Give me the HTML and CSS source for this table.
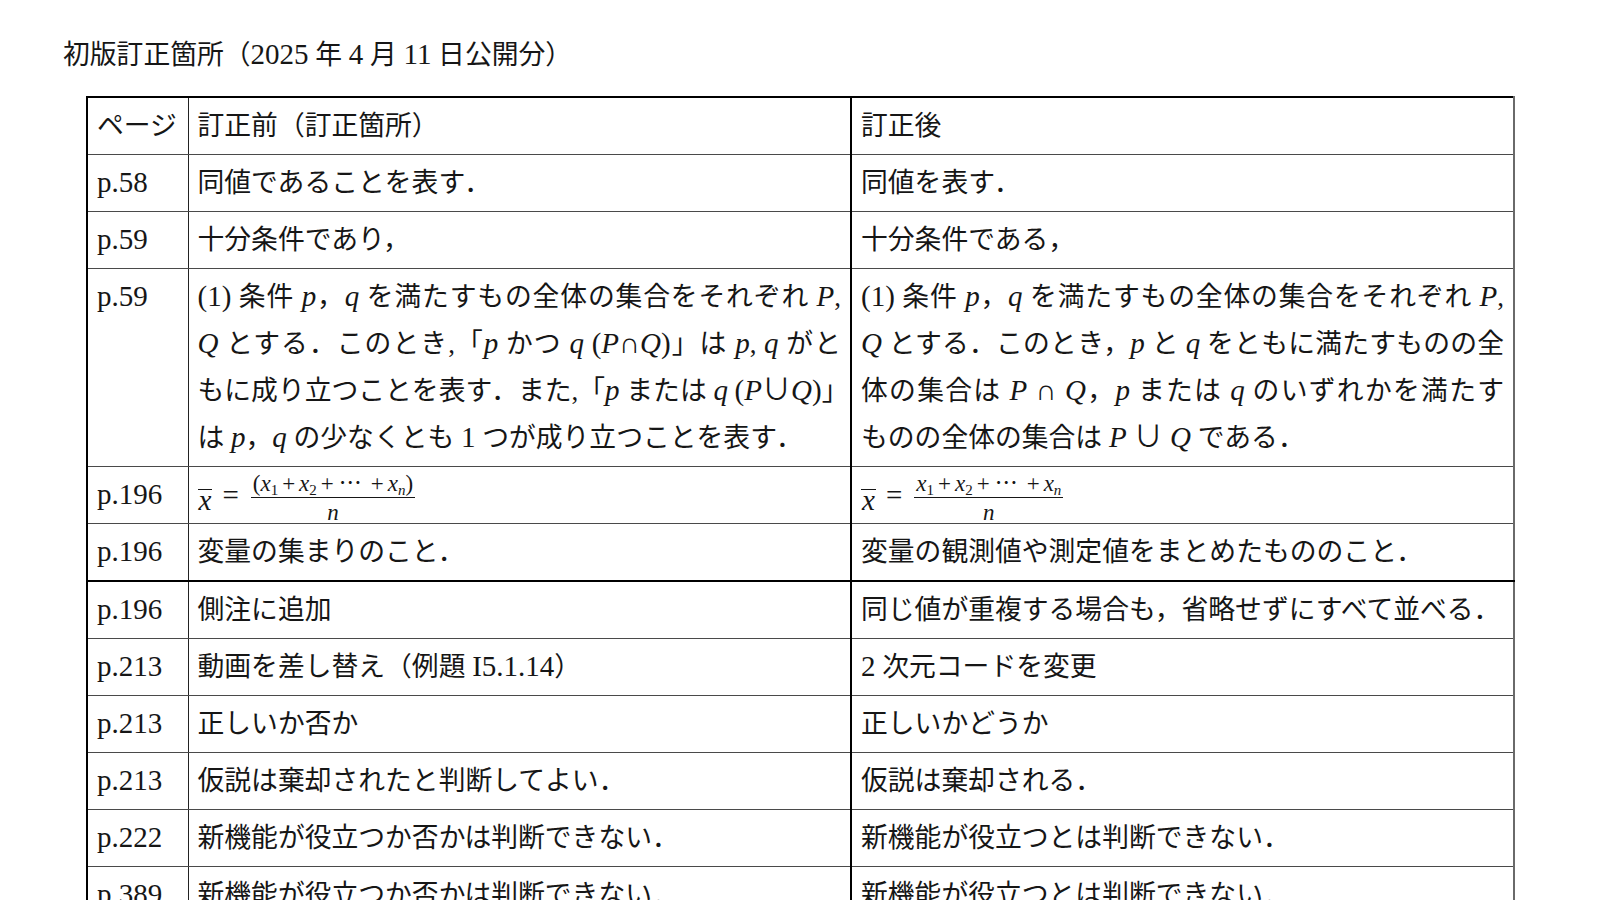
FILE: index.html
```html
<!DOCTYPE html>
<html lang="ja">
<head>
<meta charset="utf-8">
<title>初版訂正箇所</title>
<link rel="stylesheet" href="styles.css">
</head>
<body>
<main class="page">
  <h1 class="title">初版訂正箇所（<span class="l">2025</span> 年 <span class="l">4</span> 月 <span class="l">11</span> 日公開分）</h1>
  <table class="errata">
    <colgroup>
      <col class="c-page">
      <col class="c-before">
      <col class="c-after">
    </colgroup>
    <tr>
      <td>ページ</td>
      <td>訂正前（訂正箇所）</td>
      <td>訂正後</td>
    </tr>
    <tr>
      <td><span class="l">p.58</span></td>
      <td>同値であることを表す．</td>
      <td>同値を表す．</td>
    </tr>
    <tr>
      <td><span class="l">p.59</span></td>
      <td>十分条件であり，</td>
      <td>十分条件である，</td>
    </tr>
    <tr>
      <td><span class="l">p.59</span></td>
      <td>
        <span class="ln j"><span class="l">(1)</span> 条件 <i class="m">p</i>，<i class="m">q</i> を満たすもの全体の集合をそれぞれ <i class="m">P</i>,</span>
        <span class="ln j"><i class="m">Q</i> とする．このとき,「<i class="m">p</i> かつ <i class="m">q</i> <span class="l">(<i>P</i>∩<i>Q</i>)</span>」は <i class="m">p</i>, <i class="m">q</i> がと</span>
        <span class="ln j">もに成り立つことを表す．また,「<i class="m">p</i> または <i class="m">q</i> <span class="l">(<i>P</i>∪<i>Q</i>)</span>」</span>
        <span class="ln">は <i class="m">p</i>，<i class="m">q</i> の少なくとも <span class="l">1</span> つが成り立つことを表す．</span>
      </td>
      <td>
        <span class="ln j"><span class="l">(1)</span> 条件 <i class="m">p</i>，<i class="m">q</i> を満たすもの全体の集合をそれぞれ <i class="m">P</i>,</span>
        <span class="ln j"><i class="m">Q</i> とする．このとき，<i class="m">p</i> と <i class="m">q</i> をともに満たすものの全</span>
        <span class="ln j">体の集合は <span class="l"><i>P</i> ∩ <i>Q</i></span>，<i class="m">p</i> または <i class="m">q</i> のいずれかを満たす</span>
        <span class="ln">ものの全体の集合は <span class="l"><i>P</i> ∪ <i>Q</i></span> である．</span>
      </td>
    </tr>
    <tr>
      <td><span class="l">p.196</span></td>
      <td>
        <span class="math"><i class="xbar">x</i><span class="eq">=</span><span class="frac"><span class="num">(<i>x</i><sub>1</sub><span class="op">+</span><i>x</i><sub>2</sub><span class="op">+</span><span class="dots">⋯</span><span class="op">+</span><i>x</i><sub><i>n</i></sub>)</span><span class="den"><i>n</i></span></span></span>
      </td>
      <td>
        <span class="math"><i class="xbar">x</i><span class="eq">=</span><span class="frac"><span class="num"><i>x</i><sub>1</sub><span class="op">+</span><i>x</i><sub>2</sub><span class="op">+</span><span class="dots">⋯</span><span class="op">+</span><i>x</i><sub><i>n</i></sub></span><span class="den"><i>n</i></span></span></span>
      </td>
    </tr>
    <tr class="sep">
      <td><span class="l">p.196</span></td>
      <td>変量の集まりのこと．</td>
      <td>変量の観測値や測定値をまとめたもののこと．</td>
    </tr>
    <tr>
      <td><span class="l">p.196</span></td>
      <td>側注に追加</td>
      <td>同じ値が重複する場合も，省略せずにすべて並べる．</td>
    </tr>
    <tr>
      <td><span class="l">p.213</span></td>
      <td>動画を差し替え（例題 <span class="l">I5.1.14</span>）</td>
      <td><span class="l">2</span> 次元コードを変更</td>
    </tr>
    <tr>
      <td><span class="l">p.213</span></td>
      <td>正しいか否か</td>
      <td>正しいかどうか</td>
    </tr>
    <tr>
      <td><span class="l">p.213</span></td>
      <td>仮説は棄却されたと判断してよい．</td>
      <td>仮説は棄却される．</td>
    </tr>
    <tr>
      <td><span class="l">p.222</span></td>
      <td>新機能が役立つか否かは判断できない．</td>
      <td>新機能が役立つとは判断できない．</td>
    </tr>
    <tr>
      <td><span class="l">p.389</span></td>
      <td>新機能が役立つか否かは判断できない．</td>
      <td>新機能が役立つとは判断できない．</td>
    </tr>
  </table>
</main>
</body>
</html>
```

FILE: styles.css
```css
html, body {
  margin: 0;
  padding: 0;
  background: #ffffff;
}

body {
  color: #161616;
  font-family: "Liberation Serif", "Noto Sans CJK JP", serif;
  font-size: 26.8px;
}

.page {
  padding: 35px 0 40px 63px;
}

.title {
  margin: 0;
  font-weight: normal;
  font-size: 26.8px;
  line-height: 40px;
}

.l {
  font-family: "Liberation Serif", "Noto Sans CJK JP", serif;
  font-size: 29px;
  line-height: 1;
}

.m,
.l i,
.math i {
  font-family: "Liberation Serif", serif;
  font-style: italic;
}

.m {
  font-size: 29px;
  line-height: 1;
}

.errata {
  margin: 21px 0 0 23px;
  border-collapse: collapse;
  table-layout: fixed;
  width: 1428px;
  border-top: 2px solid #000;
  border-left: 2px solid #000;
  border-right: 2px solid #6a6a6a;
}

.c-page { width: 101px; }
.c-before { width: 663px; }
.c-after { width: 663px; }

.errata td {
  vertical-align: top;
  padding: 5px 9px 4px;
  line-height: 47px;
  border-bottom: 1px solid #4a4a4a;
  white-space: nowrap;
}

.errata td:nth-child(1) {
  border-right: 1px solid #222;
}

.errata td:nth-child(2) {
  border-right: 2px solid #000;
}

.errata tr.sep td {
  border-bottom: 2px solid #000;
}

.ln {
  display: block;
}

.ln.j {
  text-align: justify;
  text-align-last: justify;
}

.math {
  display: inline-flex;
  align-items: center;
  height: 47px;
  vertical-align: top;
  font-size: 29px;
  line-height: 1;
}

.xbar {
  display: inline-block;
  line-height: 16px;
  border-top: 1.5px solid #161616;
  padding: 2px 1px 0;
  margin-top: 6px;
}

.eq {
  margin: 0 12px 0 10px;
}

.frac {
  display: inline-flex;
  flex-direction: column;
  align-items: center;
  font-size: 23px;
  line-height: 1;
  margin-top: 4px;
}

.num {
  padding: 0 2px 2px;
  border-bottom: 1px solid #161616;
  white-space: nowrap;
}

.op {
  margin: 0 4px;
}

.dots {
  letter-spacing: 4px;
  margin: 0 1px;
}

.den {
  padding-top: 3px;
}

.frac sub {
  font-size: 15px;
  line-height: 0;
  vertical-align: -4px;
}
```
